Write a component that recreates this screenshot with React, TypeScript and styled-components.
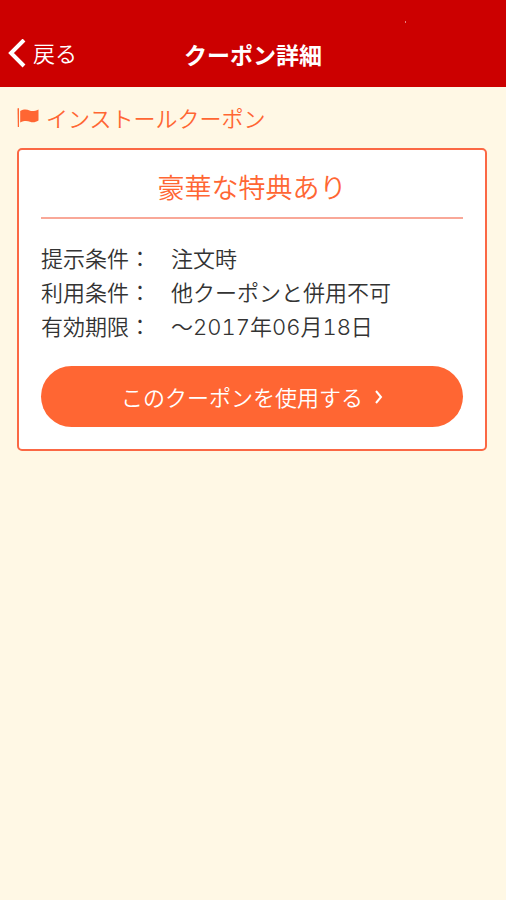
import React from "react";
import styled, { createGlobalStyle } from "styled-components";

const GlobalStyle = createGlobalStyle`
  * { box-sizing: border-box; }
  body {
    margin: 0;
    background: #fff8e5;
    font-family: "Noto Sans CJK JP", sans-serif;
    font-weight: 350;
    color: #333;
  }
`;

const Header = styled.header`
  position: relative;
  display: grid;
  grid-template-columns: 1fr auto 1fr;
  align-items: center;
  padding: 27px 8px 6px;
  background: #cc0000;
  color: #fff;
`;

const StatusDot = styled.span`
  position: absolute;
  top: 21px;
  left: 80%;
  width: 1px;
  height: 2px;
  background: #e88080;
`;

const BackButton = styled.button`
  display: flex;
  align-items: center;
  gap: 7px;
  justify-self: start;
  padding: 10px 0;
  border: 0;
  background: none;
  color: inherit;
  font: inherit;
  font-size: 22px;
  line-height: 30px;
  cursor: pointer;
`;

const BackLabel = styled.span`
  padding-bottom: 4px;
`;

const Title = styled.h1`
  margin: 0;
  font-size: 23px;
  font-weight: 700;
  line-height: 32px;
`;

const Main = styled.main`
  padding: 14px 19px 24px 17px;
`;

const SectionTitle = styled.h2`
  display: flex;
  align-items: center;
  gap: 7px;
  margin: 0 0 15px;
  color: #ff6633;
  font-size: 22px;
  font-weight: 350;
  line-height: 32px;
`;

const Card = styled.section`
  padding: 18px 22px 22px;
  border: 2px solid #fb6844;
  border-radius: 5px;
  background: #fff;
`;

const Benefit = styled.h3`
  margin: 0 0 23px;
  padding-bottom: 12px;
  border-bottom: 2px solid #f9a898;
  color: #ff6633;
  font-size: 27px;
  font-weight: 350;
  line-height: 37px;
  text-align: center;
`;

const Conditions = styled.dl`
  display: grid;
  grid-template-columns: 130px 1fr;
  margin: 0 0 22px;
  font-family: Inter, "Noto Sans CJK JP", sans-serif;
  font-size: 22px;
  font-variant-numeric: tabular-nums;
  line-height: 34px;
`;

const Term = styled.dt``;

const Detail = styled.dd`
  margin: 0;
`;

const UseButton = styled.button`
  display: flex;
  align-items: center;
  justify-content: center;
  gap: 12px;
  width: 100%;
  padding: 14px 24px;
  border: 0;
  border-radius: 32px;
  background: #ff6633;
  color: #fff;
  font: inherit;
  font-size: 22px;
  line-height: 33px;
  cursor: pointer;
`;

const conditions = [
  ["提示条件：", "注文時"],
  ["利用条件：", "他クーポンと併用不可"],
  ["有効期限：", "〜2017年06月18日"],
];

export default function App() {
  return (
    <>
      <GlobalStyle />
      <Header>
        <StatusDot />
        <BackButton type="button">
          <svg width="18" height="30" viewBox="0 0 18 30" fill="none" stroke="currentColor" strokeWidth="4" aria-hidden="true">
            <path d="M16 1L3 14l13 13" />
          </svg>
          <BackLabel>戻る</BackLabel>
        </BackButton>
        <Title>クーポン詳細</Title>
      </Header>
      <Main>
        <SectionTitle>
          <svg width="22" height="20" viewBox="0 0 22 20" fill="currentColor" aria-hidden="true">
            <path d="M0.500 1.500q0.800-1 1.500 0V20H0.800z" />
            <path d="M3.200 4c4-2.200 7-1.500 9.300-.5s5.500.8 9-1v11c-3 2-6 2.200-8.500 1.200s-5.800-1.400-9.800.8z" />
          </svg>
          インストールクーポン
        </SectionTitle>
        <Card>
          <Benefit>豪華な特典あり</Benefit>
          <Conditions>
            {conditions.map(([term, detail]) => (
              <React.Fragment key={term}>
                <Term>{term}</Term>
                <Detail>{detail}</Detail>
              </React.Fragment>
            ))}
          </Conditions>
          <UseButton type="button">
            このクーポンを使用する
            <svg width="8" height="14" viewBox="0 0 8 14" fill="none" stroke="currentColor" strokeWidth="2" aria-hidden="true">
              <path d="M1 1l5 6-5 6" />
            </svg>
          </UseButton>
        </Card>
      </Main>
    </>
  );
}
